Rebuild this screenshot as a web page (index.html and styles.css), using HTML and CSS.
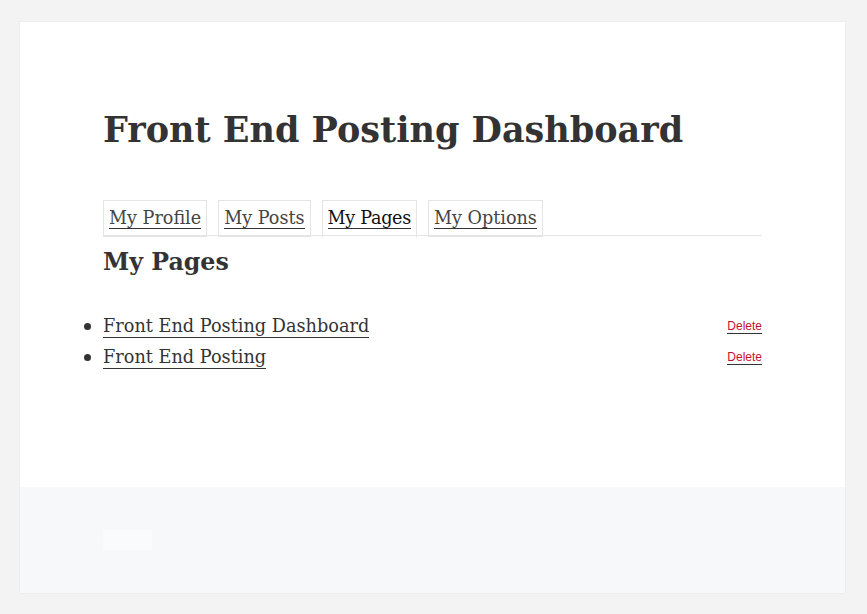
FILE: index.html
```html
<!DOCTYPE html>
<html lang="en">
<head>
    <meta charset="UTF-8">
    <meta name="viewport" content="width=device-width, initial-scale=1.0">
    <title>Front End Posting Dashboard</title>
    <link rel="stylesheet" href="styles.css">
</head>
<body>
    <div class="page">
        <div class="entry">
            <h1 class="entry-title">Front End Posting Dashboard</h1>

            <ul class="tabs">
                <li class="tab"><a href="#">My Profile</a></li>
                <li class="tab"><a href="#">My Posts</a></li>
                <li class="tab active"><a href="#">My Pages</a></li>
                <li class="tab"><a href="#">My Options</a></li>
            </ul>

            <h2 class="section-title">My Pages</h2>

            <ul class="page-list">
                <li>
                    <a href="#" class="page-link">Front End Posting Dashboard</a>
                    <a href="#" class="delete">Delete</a>
                </li>
                <li>
                    <a href="#" class="page-link">Front End Posting</a>
                    <a href="#" class="delete">Delete</a>
                </li>
            </ul>
        </div>

        <div class="entry-footer">
            <div class="edit-box"></div>
        </div>
    </div>
</body>
</html>
```

FILE: styles.css
```css
/* CSS styles */
body, h1, h2, ul, li {
    margin: 0;
    padding: 0;
}

body {
    font-family: 'DejaVu Serif', 'Liberation Serif', serif;
    background-color: #f2f3f2;
    color: #333;
    padding: 22px 22px 21px 20px;
}

.page {
    background-color: #fff;
    box-shadow: 0 0 1px rgba(0, 0, 0, 0.15);
    height: 571px;
    display: flex;
    flex-direction: column;
}

.entry {
    padding: 84px 83px 0 83px;
    flex: 1;
}

.entry-title {
    font-size: 35px;
    font-weight: bold;
    line-height: 48px;
    margin-bottom: 46px;
}

a {
    color: #333;
    text-decoration: none;
}

.tabs {
    list-style: none;
    display: flex;
    gap: 11px;
    border-bottom: 1px solid #e4e4e4;
    height: 35px;
}

.tab {
    border: 1px solid #e4e4e4;
    padding: 0 5px;
    height: 35px;
    font-size: 17.6px;
    line-height: 34px;
}

.tab a {
    border-bottom: 1px solid #333;
    color: #444;
}

.tab.active {
    border-bottom-color: #fff;
    height: 36px;
}

.tab.active a {
    color: #111;
    letter-spacing: -0.3px;
}

.section-title {
    font-size: 23.7px;
    font-weight: bold;
    line-height: 32px;
    margin-top: 10px;
    margin-bottom: 37px;
}

.page-list li {
    display: flex;
    justify-content: space-between;
    align-items: flex-start;
    height: 31px;
    font-size: 17.7px;
    position: relative;
}

.page-list li::before {
    content: '';
    position: absolute;
    left: -19px;
    top: 8px;
    width: 7px;
    height: 7px;
    border-radius: 50%;
    background-color: #333;
}

.page-link {
    border-bottom: 1px solid #333;
    line-height: 22px;
}

.delete {
    font-family: 'Liberation Sans', Arial, sans-serif;
    font-size: 12px;
    color: #c8102e;
    border-bottom: 1px solid #333;
    line-height: 13px;
    margin-top: 5px;
}

.entry-footer {
    background-color: #f7f8f9;
    height: 106px;
    padding: 43px 83px 0 83px;
    box-sizing: border-box;
}

.edit-box {
    width: 49px;
    height: 20px;
    background-color: #fafbfc;
}
```
